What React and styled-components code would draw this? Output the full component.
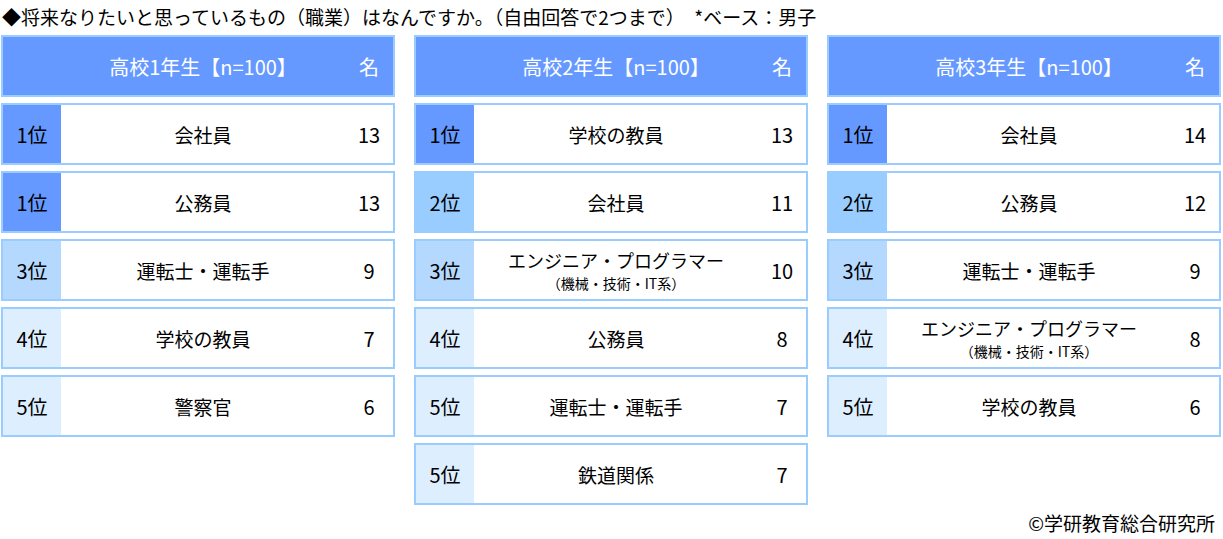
import React from 'react';
import styled, { createGlobalStyle } from 'styled-components';

const GlobalStyle = createGlobalStyle`
  body {
    margin: 0;
    background: #ffffff;
    font-family: "Noto Sans CJK JP", "Noto Sans", sans-serif;
    color: #000;
  }
`;

const rankColors = {
  1: '#6699ff',
  2: '#99ccff',
  3: '#b5d8ff',
  4: '#ddeeff',
  5: '#ddeeff',
};

const Page = styled.div`
  width: 1223px;
  height: 539px;
  overflow: hidden;
`;

const Title = styled.h1`
  margin: 0 0 1px 0;
  padding-left: 2px;
  height: 34px;
  line-height: 34px;
  font-size: 19px;
  font-weight: 400;
  white-space: pre;
`;

const Columns = styled.div`
  display: grid;
  grid-template-columns: 394px 394px 394px;
  column-gap: 19px;
  padding-left: 1px;
  align-items: start;
`;

const Column = styled.div`
  display: flex;
  flex-direction: column;
  gap: 6px;
`;

const Box = styled.div`
  display: flex;
  height: 62px;
  box-sizing: border-box;
  border: 2px solid #99ccff;
  background: ${(p) => (p.$header ? '#6699ff' : '#ffffff')};
  color: ${(p) => (p.$header ? '#ffffff' : '#000000')};
  font-size: ${(p) => (p.$header ? '20px' : '19px')};
`;

const Rank = styled.div`
  width: 58px;
  flex: none;
  display: flex;
  align-items: center;
  justify-content: center;
  font-size: 20px;
  background: ${(p) => p.$color || 'transparent'};
`;

const Name = styled.div`
  flex: 1;
  display: flex;
  flex-direction: column;
  align-items: center;
  justify-content: center;
  gap: 5px;
  text-align: center;
  line-height: 21px;
`;

const Main = styled.span`
  font-size: ${(p) => (p.$twoLine ? '18px' : 'inherit')};
  line-height: ${(p) => (p.$twoLine ? '20px' : '21px')};
`;

const Sub = styled.span`
  font-size: 14px;
  line-height: 16px;
`;

const Count = styled.div`
  width: 48px;
  flex: none;
  display: flex;
  align-items: center;
  justify-content: center;
  font-size: 20px;
`;

const Footer = styled.div`
  margin-top: 8px;
  padding-right: 8px;
  text-align: right;
  font-size: 19px;
  line-height: 20px;
`;

const data = [
  {
    grade: '高校1年生【n=100】',
    rows: [
      { rank: 1, name: '会社員', count: 13 },
      { rank: 1, name: '公務員', count: 13 },
      { rank: 3, name: '運転士・運転手', count: 9 },
      { rank: 4, name: '学校の教員', count: 7 },
      { rank: 5, name: '警察官', count: 6 },
    ],
  },
  {
    grade: '高校2年生【n=100】',
    rows: [
      { rank: 1, name: '学校の教員', count: 13 },
      { rank: 2, name: '会社員', count: 11 },
      { rank: 3, name: 'エンジニア・プログラマー', sub: '（機械・技術・IT系）', count: 10 },
      { rank: 4, name: '公務員', count: 8 },
      { rank: 5, name: '運転士・運転手', count: 7 },
      { rank: 5, name: '鉄道関係', count: 7 },
    ],
  },
  {
    grade: '高校3年生【n=100】',
    rows: [
      { rank: 1, name: '会社員', count: 14 },
      { rank: 2, name: '公務員', count: 12 },
      { rank: 3, name: '運転士・運転手', count: 9 },
      { rank: 4, name: 'エンジニア・プログラマー', sub: '（機械・技術・IT系）', count: 8 },
      { rank: 5, name: '学校の教員', count: 6 },
    ],
  },
];

const App = () => {
  return (
    <Page>
      <GlobalStyle />
      <Title>◆将来なりたいと思っているもの（職業）はなんですか。（自由回答で2つまで）　*ベース：男子</Title>
      <Columns>
        {data.map((col) => (
          <Column key={col.grade}>
            <Box $header>
              <Rank />
              <Name>{col.grade}</Name>
              <Count>名</Count>
            </Box>
            {col.rows.map((row, i) => (
              <Box key={i}>
                <Rank $color={rankColors[row.rank]}>{row.rank}位</Rank>
                <Name>
                  <Main $twoLine={!!row.sub}>{row.name}</Main>
                  {row.sub && <Sub>{row.sub}</Sub>}
                </Name>
                <Count>{row.count}</Count>
              </Box>
            ))}
          </Column>
        ))}
      </Columns>
      <Footer>©学研教育総合研究所</Footer>
    </Page>
  );
};

export default App;
